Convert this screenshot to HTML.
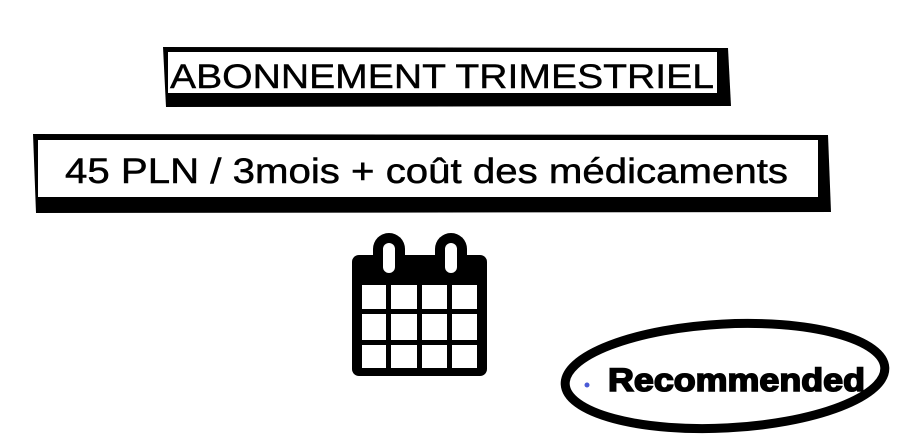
<!DOCTYPE html>
<html><head><meta charset="utf-8"><style>
html,body{margin:0;padding:0;background:#fff;width:910px;height:448px;overflow:hidden}
svg{display:block}
text{font-family:"Liberation Sans",sans-serif}
</style></head><body>
<svg width="910" height="448" viewBox="0 0 910 448">
<rect x="0" y="0" width="910" height="448" fill="#fff"/>
<path d="M163 47 L728 48 L731 106 L166 107 Z" fill="#000"/>
<rect x="168" y="52" width="549" height="41" fill="#fff"/>
<text x="170" y="88" font-size="34" textLength="544" lengthAdjust="spacingAndGlyphs" fill="#000" stroke="#000" stroke-width="0.4">ABONNEMENT TRIMESTRIEL</text>
<path d="M33 134 L828 135 L831 212 L36 213 Z" fill="#000"/>
<rect x="38" y="140" width="780" height="57" fill="#fff"/>
<text x="65" y="183" font-size="35" textLength="723" lengthAdjust="spacingAndGlyphs" fill="#000" stroke="#000" stroke-width="0.5">45 PLN / 3mois + coût des médicaments</text>
<rect x="352" y="255" width="135" height="121" rx="7" fill="#000"/>
<rect x="373" y="233" width="32" height="46" rx="16" fill="#000"/>
<rect x="435" y="233" width="32" height="46" rx="16" fill="#000"/>
<rect x="383" y="243" width="12" height="30" rx="6" fill="#fff"/>
<rect x="445" y="243" width="12" height="30" rx="6" fill="#fff"/>
<g fill="#fff">
<rect x="362" y="285" width="24" height="24"/><rect x="391" y="285" width="26" height="24"/><rect x="422" y="285" width="25" height="24"/><rect x="452" y="285" width="25" height="24"/>
<rect x="362" y="314" width="24" height="26"/><rect x="391" y="314" width="26" height="26"/><rect x="422" y="314" width="25" height="26"/><rect x="452" y="314" width="25" height="26"/>
<rect x="362" y="345" width="24" height="23"/><rect x="391" y="345" width="26" height="23"/><rect x="422" y="345" width="25" height="23"/><rect x="452" y="345" width="25" height="23"/>
</g>
<ellipse cx="725" cy="376" rx="160" ry="52" fill="none" stroke="#000" stroke-width="9" transform="rotate(-3 725 376)"/>
<circle cx="587" cy="385" r="2.5" fill="#4a5ad6"/>
<text x="608" y="391" font-size="32" font-weight="bold" textLength="257" lengthAdjust="spacingAndGlyphs" fill="#000" stroke="#000" stroke-width="1.6">Recommended</text>
</svg>
</body></html>
